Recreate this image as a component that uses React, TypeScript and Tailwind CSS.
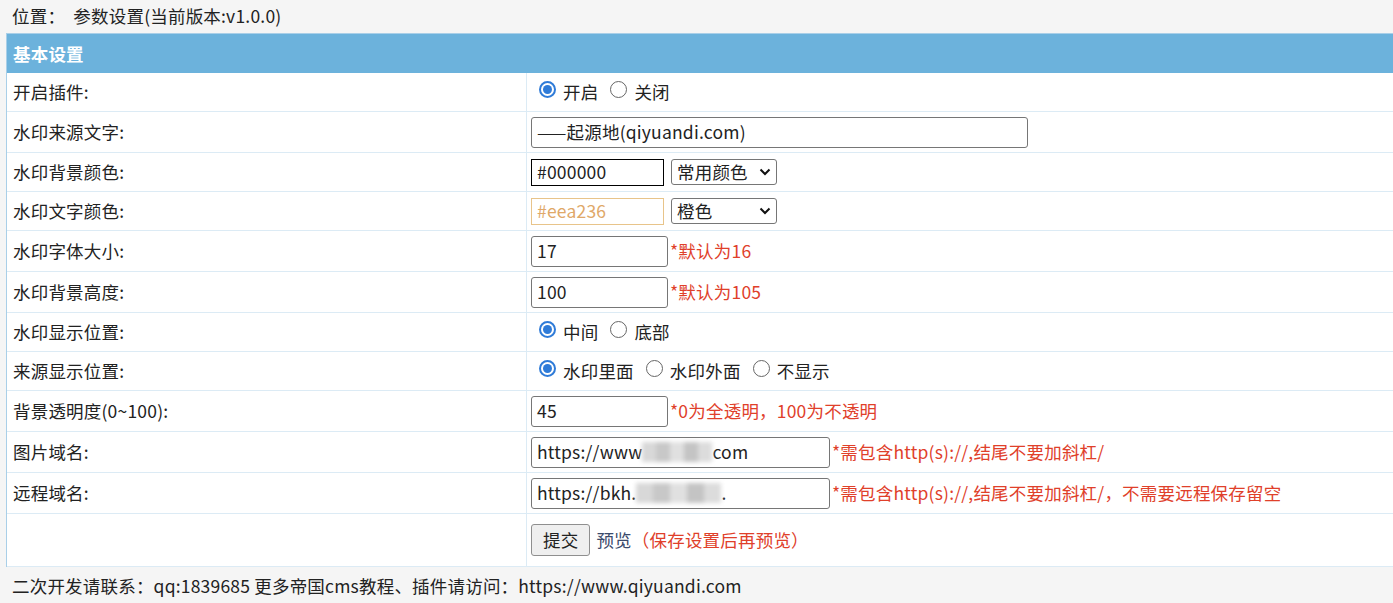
import React from "react";

const F = { fontFamily: '"Noto Sans CJK SC", "Noto Sans", sans-serif' };

function Radio({ on, label }: { on?: boolean; label: string }) {
  return (
    <span className="inline-flex items-center mr-[12px]">
      <span className={`w-[17px] h-[17px] rounded-full inline-flex items-center justify-center mr-[7px] -mt-[5px] ${on ? "border-2 border-[#2f7bd8]" : "border border-[#666]"} bg-white`}>
        {on && <span className="w-[9px] h-[9px] rounded-full bg-[#2f7bd8]" />}
      </span>
      {label}
    </span>
  );
}

function Blur({ w }: { w: number }) {
  return (
    <span className="inline-block h-[20px] align-middle" style={{ width: w }}>
      <span className="flex h-full blur-[2px]">
        <span className="flex-1 bg-[#d8d8d8]" />
        <span className="flex-1 bg-[#c8c8c8]" />
        <span className="flex-1 bg-[#e0e0e0]" />
        <span className="flex-1 bg-[#c4c4c4]" />
        <span className="flex-1 bg-[#dcdcdc]" />
      </span>
    </span>
  );
}

const inp = "h-[31px] border border-[#767676] rounded-[3px] px-[5px] flex items-center bg-white";
const hint = "text-[#e0402a] ml-[2px]";

function Row({ label, h, children }: { label: string; h: number; children: React.ReactNode }) {
  return (
    <div className="flex border-b border-[#dcebf5]" style={{ height: h }}>
      <div className="w-[520px] shrink-0 border-r border-[#dcebf5] flex items-center pl-[6px]">{label}</div>
      <div className="flex items-center pl-[4px]">{children}</div>
    </div>
  );
}

function Sel({ label }: { label: string }) {
  return (
    <div className="h-[26px] w-[106px] ml-[7px] border border-[#767676] rounded-[3px] flex items-center justify-between px-[5px]">
      <span>{label}</span>
      <svg width="12" height="8" viewBox="0 0 12 8"><path d="M1.5 1.5 6 6l4.5-4.5" fill="none" stroke="#111" strokeWidth="2" /></svg>
    </div>
  );
}

export default function App() {
  return (
    <div style={F} className="w-[1393px] h-[603px] overflow-hidden bg-[#f5f5f5] text-[17.5px] tracking-[0.2px] text-[#222] leading-none">
      <div className="h-[35px] flex items-center pl-[12px] -mt-[2px]">位置：&nbsp;&nbsp;参数设置(当前版本:v1.0.0)</div>
      <div className="ml-[6px] border-l border-t border-[#a9cfe8] bg-white">
        <div className="h-[39px] bg-[#6cb2dc] text-white font-bold flex items-center pl-[6px]">基本设置</div>
        <Row label="开启插件:" h={39}><span className="ml-[8px]" /><Radio on label="开启" /><Radio label="关闭" /></Row>
        <Row label="水印来源文字:" h={41}><div className={`${inp} w-[497px]`}>——起源地(qiyuandi.com)</div></Row>
        <Row label="水印背景颜色:" h={39}><div className="h-[27px] w-[133px] border border-black flex items-center px-[5px]">#000000</div><Sel label="常用颜色" /></Row>
        <Row label="水印文字颜色:" h={39}><div className="h-[27px] w-[133px] border border-[#e8c48a] text-[#e0a868] flex items-center px-[5px]">#eea236</div><Sel label="橙色" /></Row>
        <Row label="水印字体大小:" h={41}><div className={`${inp} w-[137px]`}>17</div><span className={hint}>*默认为16</span></Row>
        <Row label="水印背景高度:" h={41}><div className={`${inp} w-[137px]`}>100</div><span className={hint}>*默认为105</span></Row>
        <Row label="水印显示位置:" h={39}><span className="ml-[8px]" /><Radio on label="中间" /><Radio label="底部" /></Row>
        <Row label="来源显示位置:" h={39}><span className="ml-[8px]" /><Radio on label="水印里面" /><Radio label="水印外面" /><Radio label="不显示" /></Row>
        <Row label="背景透明度(0~100):" h={41}><div className={`${inp} w-[137px]`}>45</div><span className={hint}>*0为全透明，100为不透明</span></Row>
        <Row label="图片域名:" h={41}><div className={`${inp} w-[299px]`}>https://www<Blur w={70} />com</div><span className={hint}>*需包含http(s)://,结尾不要加斜杠/</span></Row>
        <Row label="远程域名:" h={41}><div className={`${inp} w-[299px]`}>https://bkh.<Blur w={85} />.</div><span className={hint}>*需包含http(s)://,结尾不要加斜杠/，不需要远程保存留空</span></Row>
        <Row label="" h={53}>
          <div className="h-[32px] px-[11px] border border-[#8f8f8f] rounded-[3px] bg-[#efefef] flex items-center">提交</div>
          <span className="ml-[6px] text-[#3b4a6b]">预览</span>
          <span className="text-[#e0402a]">（保存设置后再预览）</span>
        </Row>
      </div>
      <div className="h-[37px] flex items-center pl-[12px]">二次开发请联系：qq:1839685 更多帝国cms教程、插件请访问：https://www.qiyuandi.com</div>
    </div>
  );
}
